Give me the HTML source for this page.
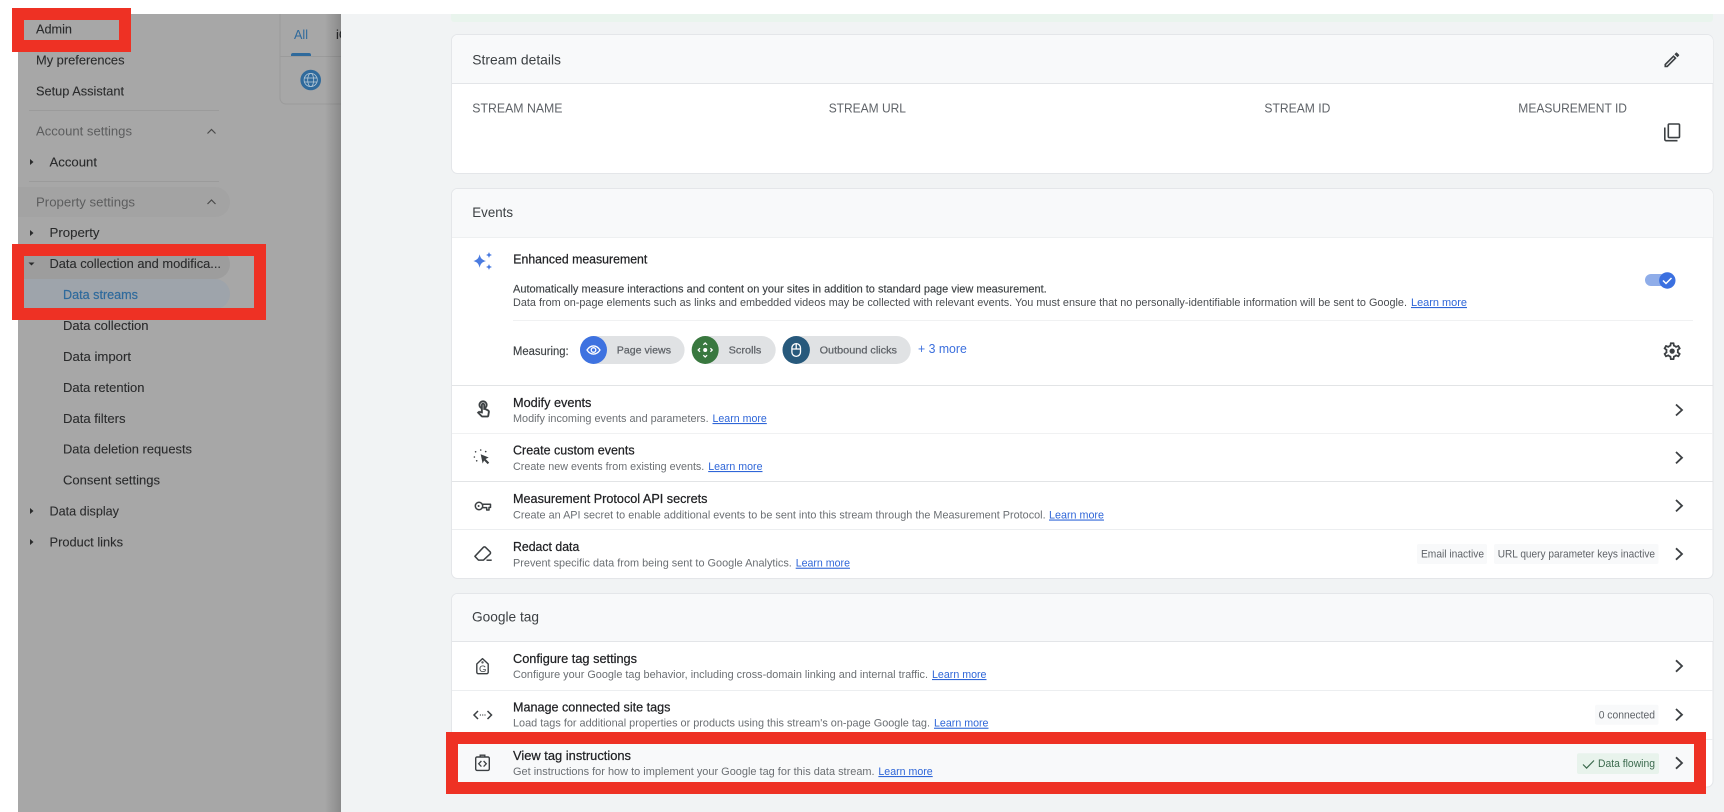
<!DOCTYPE html>
<html lang="en"><head><meta charset="utf-8"><title>Data streams</title>
<style>
html,body{margin:0;padding:0;background:#fff;width:1724px;height:812px;overflow:hidden}
svg{display:block;filter:blur(.35px)}
text{font-family:"Liberation Sans",Arial,sans-serif;white-space:pre}
.s{font-size:13px;fill:#2a2b2c;stroke:#2a2b2c;stroke-width:.1px}
.sh{font-size:13px;fill:#5c5d5e}
.h{font-size:14px;fill:#3c4043}
.l{font-size:13px;fill:#5f6368}
.t{font-size:12.5px;fill:#202124;stroke:#202124;stroke-width:.22px}
.d{font-size:11px;fill:#6b6f73}
.dk{font-size:11px;fill:#4a4d51}
.a{font-size:11px;fill:#2f66d8;text-decoration:underline}
.c{font-size:10.5px;fill:#5f6368;stroke:#5f6368;stroke-width:.25px}
.g{font-size:11px;fill:#5f6368}
</style></head><body>
<svg width="1724" height="812" viewBox="0 0 1724 812" xmlns="http://www.w3.org/2000/svg">
<defs><linearGradient id="sh" x1="0" x2="1" y1="0" y2="0"><stop offset="0" stop-color="#000" stop-opacity="0"/><stop offset="1" stop-color="#000" stop-opacity=".18"/></linearGradient></defs>
<rect width="1724" height="812" fill="#fff"/>
<rect x="18" y="14" width="323" height="798" fill="#a7a7a7"/>

<!-- tab strip behind panel -->
<path d="M280 14V98a6 6 0 0 0 6 6H341" fill="none" stroke="#9b9b9b" stroke-width="1"/>
<line x1="280" y1="56.5" x2="341" y2="56.5" stroke="#9b9b9b"/>
<text x="294" y="39" fill="#2f6a9c" style="font-size:13px" textLength="14" lengthAdjust="spacingAndGlyphs">All</text>
<text x="336" y="39" class="s">iOS</text>
<path d="M291 56v-1a2 2 0 0 1 2-2h16a2 2 0 0 1 2 2v1z" fill="#2f6a9c"/>
<circle cx="310.7" cy="80" r="10.3" fill="#2f6a9c"/>
<g fill="none" stroke="#b3c7d6" stroke-width=".8"><circle cx="310.7" cy="80" r="6.6"/><ellipse cx="310.7" cy="80" rx="3" ry="6.6"/><line x1="304.2" y1="78" x2="317.2" y2="78"/><line x1="304.2" y1="82" x2="317.2" y2="82"/></g>

<!-- sidebar pills -->
<path d="M18 187H215a15 15 0 0 1 0 30H18z" fill="#a3a3a3"/>
<path d="M18 249H215a15 15 0 0 1 0 30H18z" fill="#9d9d9d"/>
<path d="M18 279H215a15 15 0 0 1 0 30H18z" fill="#9ea4ab"/>
<line x1="29" y1="110.5" x2="219" y2="110.5" stroke="#9b9b9b"/>
<line x1="29" y1="181.5" x2="219" y2="181.5" stroke="#9b9b9b"/>

<text class="s" x="36" y="33.5" textLength="36" lengthAdjust="spacingAndGlyphs">Admin</text>
<text class="s" x="36" y="64.5" textLength="88.5" lengthAdjust="spacingAndGlyphs">My preferences</text>
<text class="s" x="36" y="95.5" textLength="88" lengthAdjust="spacingAndGlyphs">Setup Assistant</text>
<text class="sh" x="36" y="135.5" textLength="96" lengthAdjust="spacingAndGlyphs">Account settings</text>
<text class="s" x="49.5" y="166.5" textLength="47.5" lengthAdjust="spacingAndGlyphs">Account</text>
<text class="sh" x="36" y="206.5" textLength="99" lengthAdjust="spacingAndGlyphs">Property settings</text>
<text class="s" x="49.5" y="237" textLength="50" lengthAdjust="spacingAndGlyphs">Property</text>
<text class="s" x="49.5" y="268" textLength="171.5" lengthAdjust="spacingAndGlyphs">Data collection and modifica...</text>
<text x="63" y="299" textLength="75" lengthAdjust="spacingAndGlyphs" style="font-size:13px;fill:#2f6a9c;stroke:#2f6a9c;stroke-width:.2px">Data streams</text>
<text class="s" x="63" y="330" textLength="85.5" lengthAdjust="spacingAndGlyphs">Data collection</text>
<text class="s" x="63" y="361" textLength="68" lengthAdjust="spacingAndGlyphs">Data import</text>
<text class="s" x="63" y="392" textLength="81.5" lengthAdjust="spacingAndGlyphs">Data retention</text>
<text class="s" x="63" y="423" textLength="62.5" lengthAdjust="spacingAndGlyphs">Data filters</text>
<text class="s" x="63" y="453.5" textLength="129" lengthAdjust="spacingAndGlyphs">Data deletion requests</text>
<text class="s" x="63" y="484.5" textLength="97" lengthAdjust="spacingAndGlyphs">Consent settings</text>
<text class="s" x="49.5" y="515.5" textLength="69.5" lengthAdjust="spacingAndGlyphs">Data display</text>
<text class="s" x="49.5" y="546.5" textLength="73.5" lengthAdjust="spacingAndGlyphs">Product links</text>

<g fill="#2a2b2c">
<path d="M30 159l3.5 3-3.5 3z"/><path d="M30 230l3.5 3-3.5 3z"/><path d="M28.5 262.5h6l-3 3z"/><path d="M30 508l3.5 3-3.5 3z"/><path d="M30 539l3.5 3-3.5 3z"/>
</g>
<g fill="none" stroke="#4a4a4a" stroke-width="1.2"><path d="M207.5 133.5l4-4 4 4"/><path d="M207.5 204l4-4 4 4"/></g>

<!-- right panel -->
<rect x="325" y="14" width="16" height="798" fill="url(#sh)"/>
<rect x="341" y="14" width="1383" height="798" fill="#f1f3f4"/>
<path d="M451 14H1713V19a3 3 0 0 1-3 3H454a3 3 0 0 1-3-3z" fill="#e9f4ed"/>

<!-- card 1 -->
<rect x="451.5" y="34.5" width="1261.5" height="139" rx="6" fill="#fff" stroke="#e4e6e9"/>
<path d="M452 83V41a6 6 0 0 1 6-6H1707a6 6 0 0 1 6 6V83z" fill="#f8f9fa"/>
<line x1="452" y1="83.5" x2="1713" y2="83.5" stroke="#e3e5e8"/>
<text class="h" x="472.3" y="64.5" textLength="88.7" lengthAdjust="spacingAndGlyphs">Stream details</text>
<text class="l" x="472.3" y="112.7" textLength="90.2" lengthAdjust="spacingAndGlyphs">STREAM NAME</text>
<text class="l" x="828.7" y="112.7" textLength="77.3" lengthAdjust="spacingAndGlyphs">STREAM URL</text>
<text class="l" x="1264.4" y="112.7" textLength="66" lengthAdjust="spacingAndGlyphs">STREAM ID</text>
<text class="l" x="1518.3" y="112.7" textLength="108.7" lengthAdjust="spacingAndGlyphs">MEASUREMENT ID</text>
<path fill="#3c4043" transform="translate(1662,50) scale(.82)" d="M3 17.25V21h3.75L17.81 9.94l-3.75-3.75L3 17.25zM5.92 19H5v-.92l9.06-9.06.92.92L5.92 19zM20.71 5.63l-2.34-2.34c-.2-.2-.45-.29-.71-.29s-.51.1-.7.29l-1.83 1.83 3.75 3.75 1.83-1.83c.39-.39.39-1.02 0-1.41z"/>
<g fill="none" stroke="#3c4043" stroke-width="1.6">
<rect x="1668.3" y="124" width="11.2" height="13.6" rx="1"/>
<path d="M1664.8 127.5V139.3a1.4 1.4 0 0 0 1.4 1.4H1677.5"/>
</g>

<!-- card 2 -->
<rect x="451.5" y="188.5" width="1261.5" height="390" rx="6" fill="#fff" stroke="#e4e6e9"/>
<path d="M452 237V195a6 6 0 0 1 6-6H1707a6 6 0 0 1 6 6V237z" fill="#f8f9fa"/>
<line x1="452" y1="237.5" x2="1713" y2="237.5" stroke="#eef0f1"/>
<text class="h" x="472.3" y="217" textLength="40.7" lengthAdjust="spacingAndGlyphs">Events</text>

<g fill="#4a7be0">
<path d="M479.6 254.2c.9 4 2.4 5.6 6.4 6.8-4 1.1-5.5 2.7-6.4 6.8-.9-4.1-2.4-5.7-6.2-6.8 3.8-1.2 5.3-2.8 6.2-6.8z"/>
<path d="M489 251.8c.4 2 1.1 2.7 3.1 3.2-2 .5-2.7 1.2-3.1 3.2-.4-2-1.1-2.7-3.1-3.2 2-.5 2.7-1.2 3.1-3.2z"/>
<path d="M489 263.8c.4 2 1.1 2.7 3.1 3.2-2 .5-2.7 1.2-3.1 3.2-.4-2-1.1-2.7-3.1-3.2 2-.5 2.7-1.2 3.1-3.2z"/>
</g>
<text class="t" x="513.3" y="263.5" textLength="134" lengthAdjust="spacingAndGlyphs">Enhanced measurement</text>
<text class="dk" x="513" y="292.5" textLength="533.7" lengthAdjust="spacingAndGlyphs" style="fill:#3c4043;stroke:#3c4043;stroke-width:.15px">Automatically measure interactions and content on your sites in addition to standard page view measurement.</text>
<text class="dk" x="513" y="306" textLength="894" lengthAdjust="spacingAndGlyphs">Data from on-page elements such as links and embedded videos may be collected with relevant events. You must ensure that no personally-identifiable information will be sent to Google.</text>
<text class="a" x="1411" y="306" textLength="56" lengthAdjust="spacingAndGlyphs">Learn more</text>
<line x1="513" y1="320.5" x2="1693" y2="320.5" stroke="#f0f1f2"/>

<!-- toggle -->
<rect x="1645" y="274" width="22" height="12" rx="6" fill="#8fade9"/>
<circle cx="1667.3" cy="280.5" r="8.2" fill="#3b70e0"/>
<path d="M1663 280.5l3 3 5.5-5.5" fill="none" stroke="#fff" stroke-width="1.5"/>
<path fill="#3c4043" transform="translate(1661.6,340.6) scale(.88)" d="M19.43 12.98c.04-.32.07-.64.07-.98 0-.34-.03-.66-.07-.98l2.11-1.65c.19-.15.24-.42.12-.64l-2-3.46c-.09-.16-.26-.25-.44-.25-.06 0-.12.01-.17.03l-2.49 1c-.52-.4-1.08-.73-1.69-.98l-.38-2.65C14.46 2.18 14.25 2 14 2h-4c-.25 0-.46.18-.49.42l-.38 2.65c-.61.25-1.17.59-1.69.98l-2.49-1c-.06-.02-.12-.03-.18-.03-.17 0-.34.09-.43.25l-2 3.46c-.13.22-.07.49.12.64l2.11 1.65c-.04.32-.07.65-.07.98 0 .33.03.66.07.98l-2.11 1.65c-.19.15-.24.42-.12.64l2 3.46c.09.16.26.25.44.25.06 0 .12-.01.17-.03l2.49-1c.52.4 1.08.73 1.69.98l.38 2.65c.03.24.24.42.49.42h4c.25 0 .46-.18.49-.42l.38-2.65c.61-.25 1.17-.59 1.69-.98l2.49 1c.06.02.12.03.18.03.17 0 .34-.09.43-.25l2-3.46c.12-.22.07-.49-.12-.64l-2.11-1.65zm-1.98-1.71c.04.31.05.52.05.73 0 .21-.02.43-.05.73l-.14 1.13.89.7 1.08.84-.7 1.21-1.27-.51-1.04-.42-.9.68c-.43.32-.84.56-1.25.73l-1.06.43-.16 1.13-.2 1.35h-1.4l-.19-1.35-.16-1.13-1.06-.43c-.43-.18-.83-.41-1.23-.71l-.91-.7-1.06.43-1.27.51-.7-1.21 1.08-.84.89-.7-.14-1.13c-.03-.31-.05-.54-.05-.74s.02-.43.05-.73l.14-1.13-.89-.7-1.08-.84.7-1.21 1.27.51 1.04.42.9-.68c.43-.32.84-.56 1.25-.73l1.06-.43.16-1.13.2-1.35h1.39l.19 1.35.16 1.13 1.06.43c.43.18.83.41 1.23.71l.91.7 1.06-.43 1.27-.51.7 1.21-1.07.85-.89.7.14 1.13zM12 9a3 3 0 1 0 0 6 3 3 0 0 0 0-6z"/>

<!-- measuring -->
<text class="dk" x="513" y="355" textLength="55.6" lengthAdjust="spacingAndGlyphs" style="font-size:11.5px;fill:#3c4043;stroke:#3c4043;stroke-width:.15px">Measuring:</text>
<rect x="580" y="336" width="104.6" height="28" rx="14" fill="#e0e2e4"/>
<rect x="691.8" y="336" width="83.9" height="28" rx="14" fill="#e0e2e4"/>
<rect x="782.5" y="336" width="128.2" height="28" rx="14" fill="#e0e2e4"/>
<ellipse cx="593.5" cy="350" rx="13.5" ry="14" fill="#3e72e0"/>
<ellipse cx="705.2" cy="350" rx="13.5" ry="14" fill="#39783f"/>
<ellipse cx="796.2" cy="350" rx="13.7" ry="14" fill="#27597c"/>
<g fill="none" stroke="#fff" stroke-width="1.3">
<path d="M587 350c3.5-5.4 9.5-5.4 13 0-3.5 5.4-9.5 5.4-13 0z"/><circle cx="593.5" cy="350" r="2.3"/>
<path d="M703.3 344.8l1.9-1.8 1.9 1.8M703.3 355.2l1.9 1.8 1.9-1.8M700 348.2l-1.8 1.8 1.8 1.8M710.4 348.2l1.8 1.8-1.8 1.8"/><circle cx="705.2" cy="350" r="2" fill="#fff" stroke="none"/>
<rect x="791.9" y="343.6" width="8.6" height="12.8" rx="4.3"/><path d="M791.9 349h8.6M796.2 343.6v5.4"/>
</g>
<text class="c" x="616.8" y="353.5" textLength="54.2" lengthAdjust="spacingAndGlyphs">Page views</text>
<text class="c" x="728.6" y="353.5" textLength="32.8" lengthAdjust="spacingAndGlyphs">Scrolls</text>
<text class="c" x="819.6" y="353.5" textLength="77.4" lengthAdjust="spacingAndGlyphs">Outbound clicks</text>
<text x="918" y="353" textLength="48.8" lengthAdjust="spacingAndGlyphs" style="font-size:12.5px;fill:#3b6fdd">+ 3 more</text>

<line x1="452" y1="385.5" x2="1713" y2="385.5" stroke="#e2e4e6"/>
<line x1="452" y1="433.5" x2="1713" y2="433.5" stroke="#f0f1f2"/>
<line x1="452" y1="481.5" x2="1713" y2="481.5" stroke="#e2e4e6"/>
<line x1="452" y1="529.5" x2="1713" y2="529.5" stroke="#eceef0"/>

<!-- row icons -->
<path fill="#3c4043" stroke="#3c4043" stroke-width=".35" transform="translate(473.8,399.7) scale(.8)" d="M18.19 12.44l-3.24-1.62c1.29-1 2.12-2.56 2.12-4.32 0-3.03-2.47-5.5-5.5-5.5s-5.5 2.47-5.5 5.5c0 2.13 1.22 3.98 3 4.89v3.26c-2.15-.46-2.02-.44-2.26-.44-.53 0-1.03.21-1.41.59L4 16.22l5.09 5.09C9.52 21.75 10.12 22 10.74 22h6.3c.98 0 1.81-.7 1.97-1.67l.8-4.71c.22-1.3-.43-2.58-1.62-3.18zm-.35 2.85l-.8 4.71h-6.3c-.09 0-.17-.04-.24-.1l-3.68-3.68 4.25.89V6.5c0-.28.22-.5.5-.5s.5.22.5.5v6h1.76l3.46 1.73c.4.2.62.63.55 1.06zM8.07 6.5c0-1.93 1.57-3.5 3.5-3.5s3.5 1.57 3.5 3.5c0 .95-.38 1.81-1 2.44V6.5c0-1.38-1.12-2.5-2.5-2.5s-2.5 1.12-2.5 2.5v2.44c-.62-.63-1-1.49-1-2.44z"/>
<path fill="#3c4043" d="M480.7 454.3l8 3.2-3.1 1.5 3.6 3.6-1.5 1.5-3.6-3.6-1.5 3z"/>
<g fill="#3c4043"><circle cx="475.6" cy="451.8" r=".8"/><circle cx="480.7" cy="450" r=".8"/><circle cx="485.7" cy="451.6" r=".8"/><circle cx="474.4" cy="457" r=".8"/><circle cx="476.7" cy="460.8" r=".8"/></g>
<g fill="none" stroke="#3c4043" stroke-width="1.5" stroke-linejoin="round">
<circle cx="479" cy="506" r="3.7"/>
<path d="M482.7 504.3H490.5V507.4H489V510H486.7V507.6H482.7"/>
</g>
<circle cx="478.6" cy="506" r="1" fill="#3c4043"/>
<g fill="none" stroke="#3c4043" stroke-width="1.5" stroke-linejoin="round"><path d="M474.9 556.3l8.5-9 a1.5 1.5 0 0 1 2.1 0l4.6 4.5a1.5 1.5 0 0 1 0 2.1l-6.6 6.2h-5z"/><path d="M486.5 560.2h5.2"/></g>

<!-- event rows -->
<text class="t" x="513" y="407" textLength="78.4" lengthAdjust="spacingAndGlyphs">Modify events</text>
<text class="d" x="513" y="422" textLength="195.6" lengthAdjust="spacingAndGlyphs">Modify incoming events and parameters.</text>
<text class="a" x="712.5" y="422" textLength="54.3" lengthAdjust="spacingAndGlyphs">Learn more</text>
<text class="t" x="513" y="454.5" textLength="121.6" lengthAdjust="spacingAndGlyphs">Create custom events</text>
<text class="d" x="513" y="470" textLength="191.3" lengthAdjust="spacingAndGlyphs">Create new events from existing events.</text>
<text class="a" x="708.2" y="470" textLength="54.3" lengthAdjust="spacingAndGlyphs">Learn more</text>
<text class="t" x="513" y="503" textLength="194.5" lengthAdjust="spacingAndGlyphs">Measurement Protocol API secrets</text>
<text class="d" x="513" y="518.5" textLength="532.6" lengthAdjust="spacingAndGlyphs">Create an API secret to enable additional events to be sent into this stream through the Measurement Protocol.</text>
<text class="a" x="1049" y="518.5" textLength="55" lengthAdjust="spacingAndGlyphs">Learn more</text>
<text class="t" x="513" y="551" textLength="66.3" lengthAdjust="spacingAndGlyphs">Redact data</text>
<text class="d" x="513" y="566.7" textLength="278.8" lengthAdjust="spacingAndGlyphs">Prevent specific data from being sent to Google Analytics.</text>
<text class="a" x="795.7" y="566.7" textLength="54.3" lengthAdjust="spacingAndGlyphs">Learn more</text>
<rect x="1417" y="544" width="70" height="20" rx="2" fill="#f8f9fa"/>
<rect x="1494" y="544" width="164.5" height="20" rx="2" fill="#f8f9fa"/>
<text class="g" x="1421" y="557.5" textLength="63" lengthAdjust="spacingAndGlyphs">Email inactive</text>
<text class="g" x="1497.7" y="557.5" textLength="157.3" lengthAdjust="spacingAndGlyphs">URL query parameter keys inactive</text>

<!-- card 3 -->
<rect x="451.5" y="593.5" width="1261.5" height="193.5" rx="6" fill="#fff" stroke="#e4e6e9"/>
<path d="M452 642V600a6 6 0 0 1 6-6H1707a6 6 0 0 1 6 6V642z" fill="#f8f9fa"/>
<line x1="452" y1="641.5" x2="1713" y2="641.5" stroke="#e3e5e8"/>
<line x1="452" y1="690.5" x2="1713" y2="690.5" stroke="#eceef0"/>
<line x1="452" y1="739.5" x2="1713" y2="739.5" stroke="#eceef0"/>
<text class="h" x="472" y="621.5" textLength="67" lengthAdjust="spacingAndGlyphs">Google tag</text>

<g fill="none" stroke="#3c4043" stroke-width="1.4" stroke-linejoin="round">
<path d="M476.8 664L482.5 658.6 488.2 664V672.3a1.4 1.4 0 0 1-1.4 1.4H478.2a1.4 1.4 0 0 1-1.4-1.4z"/>
<circle cx="482.5" cy="662.4" r=".7" stroke-width=".9"/>
</g>
<text x="479" y="672" style="font-size:9.5px;fill:#3c4043">G</text>
<text class="t" x="513" y="663" textLength="124" lengthAdjust="spacingAndGlyphs">Configure tag settings</text>
<text class="d" x="513" y="678" textLength="415" lengthAdjust="spacingAndGlyphs">Configure your Google tag behavior, including cross-domain linking and internal traffic.</text>
<text class="a" x="932" y="678" textLength="54.5" lengthAdjust="spacingAndGlyphs">Learn more</text>

<g fill="none" stroke="#3c4043" stroke-width="1.5"><path d="M478 711l-4 4 4 4M487.5 711l4 4-4 4"/></g>
<g fill="#3c4043"><circle cx="480.4" cy="715" r=".65"/><circle cx="482.7" cy="715" r=".65"/><circle cx="485" cy="715" r=".65"/></g>
<text class="t" x="513" y="711.7" textLength="157.4" lengthAdjust="spacingAndGlyphs">Manage connected site tags</text>
<text class="d" x="513" y="726.7" textLength="417" lengthAdjust="spacingAndGlyphs">Load tags for additional properties or products using this stream's on-page Google tag.</text>
<text class="a" x="934" y="726.7" textLength="54.5" lengthAdjust="spacingAndGlyphs">Learn more</text>
<rect x="1595" y="704.7" width="63.5" height="20" rx="2" fill="#f8f9fa"/>
<text class="g" x="1598.7" y="718.5" textLength="56.3" lengthAdjust="spacingAndGlyphs">0 connected</text>

<!-- red boxes + highlighted row -->
<rect x="458" y="744" width="1236" height="38" fill="#f8f9fa"/>
<rect x="452" y="738" width="1248" height="50" fill="none" stroke="#ee3124" stroke-width="12"/>
<rect x="18" y="14" width="107" height="32" fill="none" stroke="#ee3124" stroke-width="12"/>
<rect x="18" y="250" width="242" height="64" fill="none" stroke="#ee3124" stroke-width="12"/>

<g fill="none" stroke="#3c4043" stroke-width="1.4">
<rect x="475.7" y="757" width="13.6" height="13.4" rx="1.4"/>
<path d="M480.2 757v-1.8h4.6v1.8"/>
<path d="M481.4 761l-2.7 2.8 2.7 2.8M483.6 761l2.7 2.8-2.7 2.8" stroke-width="1.3"/>
</g>
<text class="t" x="513" y="760" textLength="118" lengthAdjust="spacingAndGlyphs">View tag instructions</text>
<text class="d" x="513" y="775" textLength="361.6" lengthAdjust="spacingAndGlyphs">Get instructions for how to implement your Google tag for this data stream.</text>
<text class="a" x="878.4" y="775" textLength="54.3" lengthAdjust="spacingAndGlyphs">Learn more</text>
<rect x="1577" y="753.3" width="82" height="20.7" rx="2" fill="#e8f3ec"/>
<path d="M1583 764.5l3.6 3.6 7.4-7.6" fill="none" stroke="#3d6b4f" stroke-width="1.2"/>
<text class="g" x="1598" y="767" textLength="57" lengthAdjust="spacingAndGlyphs" style="fill:#3d6b4f">Data flowing</text>

<!-- chevrons -->
<g fill="none" stroke="#3c4043" stroke-width="1.8">
<path d="M1676 404.5l6 5.5-6 5.5"/><path d="M1676 452l6 5.7-6 5.7"/><path d="M1676 500l6 5.7-6 5.7"/><path d="M1676 548.3l6 5.7-6 5.7"/>
<path d="M1676 660.3l6 5.7-6 5.7"/><path d="M1676 709l6 5.7-6 5.7"/><path d="M1676 757.3l6 5.7-6 5.7"/>
</g>
</svg>
</body></html>
